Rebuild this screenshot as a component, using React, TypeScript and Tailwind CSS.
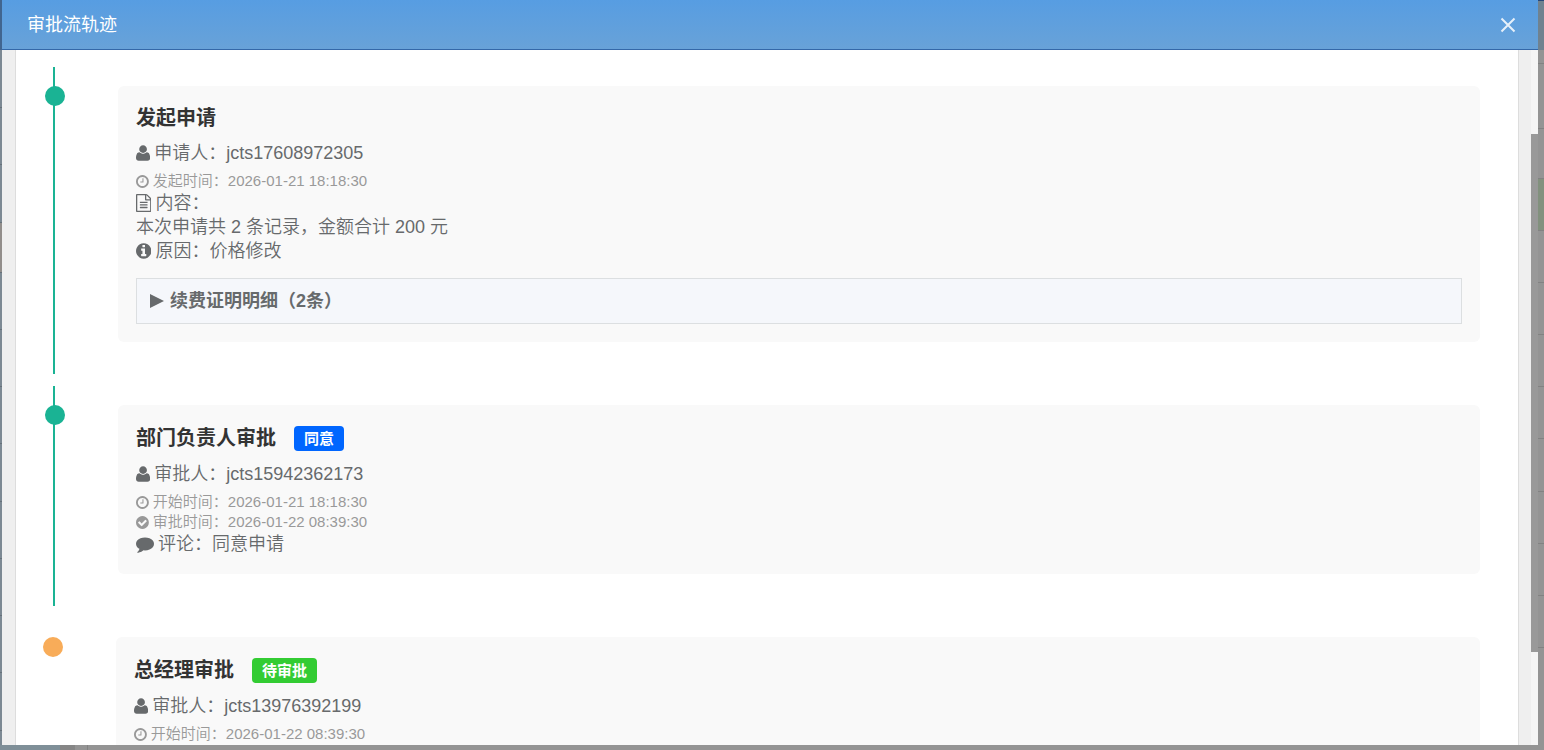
import React from "react";

const DISC =
  "M1664 896q0 209-103 385.5t-279.5 279.5-385.5 103-385.5-103-279.5-279.5-103-385.5 103-385.5 279.5-279.5 385.5-103 385.5 103 279.5 279.5 103 385.5z";

const ICONS = {
  user: {
    box: "192 0 1408 1792",
    d: "M1600 1405q0 120-73 189.5t-194 69.5h-874q-121 0-194-69.5t-73-189.5q0-53 3.5-103.5t14-109 26.5-108.5 43-97.5 62-81 85.5-53.5 111.5-20q9 0 42 21.5t74.5 48 108 48 133.5 21.5 133.5-21.5 108-48 74.5-48 42-21.5q61 0 111.5 20t85.5 53.5 62 81 43 97.5 26.5 108.5 14 109 3.5 103.5zM1280 512q0 159-112.5 271.5t-271.5 112.5-271.5-112.5-112.5-271.5 112.5-271.5 271.5-112.5 271.5 112.5 112.5 271.5z",
  },
  clock: {
    box: "128 0 1536 1792",
    d:
      "M1024 544v448q0 14-9 23t-23 9h-320q-14 0-23-9t-9-23v-64q0-14 9-23t23-9h224v-352q0-14 9-23t23-9h64q14 0 23 9t9 23zM1440 896q0-148-73-273t-198-198-273-73-273 73-198 198-73 273 73 273 198 198 273 73 273-73 198-198 73-273z" +
      DISC,
  },
  file: {
    box: "128 0 1536 1792",
    d: "M1596 380q28 28 48 76t20 88v1152q0 40-28 68t-68 28h-1344q-40 0-68-28t-28-68v-1600q0-40 28-68t68-28h896q40 0 88 20t76 48zm-444-244v376h376q-10-29-22-41l-313-313q-12-12-41-22zm384 1528v-1024h-416q-40 0-68-28t-28-68v-416h-768v1536h1280zm-1024-864q0-14 9-23t23-9h704q14 0 23 9t9 23v64q0 14-9 23t-23 9h-704q-14 0-23-9t-9-23v-64zm736 224q14 0 23 9t9 23v64q0 14-9 23t-23 9h-704q-14 0-23-9t-9-23v-64q0-14 9-23t23-9h704zm0 256q14 0 23 9t9 23v64q0 14-9 23t-23 9h-704q-14 0-23-9t-9-23v-64q0-14 9-23t23-9h704z",
  },
  info: {
    box: "128 0 1536 1792",
    d:
      "M1152 1376v-160q0-14-9-23t-23-9h-96v-512q0-14-9-23t-23-9h-320q-14 0-23 9t-9 23v160q0 14 9 23t23 9h96v320h-96q-14 0-23 9t-9 23v160q0 14 9 23t23 9h448q14 0 23-9t9-23zM1024 480v-160q0-14-9-23t-23-9h-192q-14 0-23 9t-9 23v160q0 14 9 23t23 9h192q14 0 23-9t9-23z" +
      DISC,
  },
  check: {
    box: "128 0 1536 1792",
    d:
      "M1412 734q0-28-18-46l-91-90q-19-19-45-19t-45 19l-408 407-226-226q-19-19-45-19t-45 19l-91 90q-18 18-18 46 0 27 18 45l362 362q19 19 45 19 27 0 46-19l543-543q18-18 18-45z" +
      DISC,
  },
  comment: {
    box: "0 0 1792 1792",
    d: "M1792 896q0 174-120 321.5t-326 233-450 85.5q-70 0-145-8-198 175-460 225-49 14-114 22-17 2-30.5-9t-17.5-29v-1q-3-4-.5-12t2-10 4.5-9.5l6-9 7-8.5 8-9q7-8 31-34.5t34.5-38 31-39.5 32.5-51 27-59 26-76q-157-89-247.5-220t-90.5-281q0-174 120-321.5t326-233 450-85.5 450 85.5 326 233 120 321.5z",
  },
};

type IconName = keyof typeof ICONS;

function Icon({ name }: { name: IconName }) {
  return (
    <svg viewBox={ICONS[name].box} className="h-[1em] w-auto shrink-0 fill-current" fillRule="evenodd" aria-hidden="true">
      <path d={ICONS[name].d} />
    </svg>
  );
}

function Line({ icon, small, children }: { icon?: IconName; small?: boolean; children: React.ReactNode }) {
  return (
    <p
      className={
        small
          ? "flex items-center gap-1 text-[15px] leading-5 text-[#999]"
          : "flex items-center gap-1 text-lg leading-6 text-[#676a6c]"
      }
    >
      {icon && <Icon name={icon} />}
      <span>{children}</span>
    </p>
  );
}

interface StepProps {
  title: string;
  badge?: string;
  badgeClass?: string;
  person: string;
  done?: boolean;
  children: React.ReactNode;
}

function Step({ title, badge, badgeClass, person, done, children }: StepProps) {
  return (
    <li className={`flex items-start pt-[19px] pb-8 ${done ? "mb-3 border-l-2 border-[#1ab394]" : ""}`}>
      <span className={`-ml-2.5 size-5 shrink-0 rounded-full ${done ? "bg-[#1ab394]" : "bg-[#f8ac59]"}`} />
      <article className="ml-[53px] min-w-0 flex-1 rounded-md bg-[#f9f9f9] p-[18px]">
        <header className="flex items-center gap-[18px]">
          <h3 className="text-xl leading-7 font-bold text-[#333]">{title}</h3>
          {badge && (
            <span className={`mt-[3px] mb-[2px] rounded px-2.5 text-[15px] leading-[25px] font-bold text-white ${badgeClass}`}>
              {badge}
            </span>
          )}
        </header>
        <div className="mt-[9px] mb-1.5">
          <Line icon="user">{person}</Line>
        </div>
        {children}
      </article>
    </li>
  );
}

const LEFT_ROWS = [58, 57, 58, 50, 57, 57, 57, 58, 57, 57, 57, 58];
const RIGHT_ROWS = [14, 65, 50, 52, 52, 52, 52, 52, 53, 52, 52, 52];

function Backdrop() {
  return (
    <div className="absolute inset-0 flex flex-col bg-[#949494]" aria-hidden="true">
      <div className="flex min-h-0 flex-1 justify-between overflow-hidden">
        <div className="flex w-[2px] flex-col bg-[#7c8993]">
          <div className="h-[50px] shrink-0 bg-[#41658f]" />
          {LEFT_ROWS.map((h, i) => (
            <div
              key={i}
              className={`shrink-0 border-b border-[#66717a] ${i === 3 ? "bg-[#928e8b]" : ""}`}
              style={{ height: h }}
            />
          ))}
        </div>
        <div className="flex w-1.5 flex-col">
          <div className="h-[50px] shrink-0 border-t border-[#26477a] bg-[#6f8290]" />
          {RIGHT_ROWS.map((h, i) => (
            <div
              key={i}
              className={`shrink-0 border-b border-[#828282] ${i === 3 ? "bg-[#82917e]" : ""}`}
              style={{ height: h }}
            />
          ))}
        </div>
      </div>
      <div className="flex h-[5px] shrink-0">
        <div className="w-[60px] bg-[#7f8f98]" />
        <div className="w-[15px] bg-[#868686]" />
        <div className="w-[13px] border-r border-[#828282]" />
      </div>
    </div>
  );
}

export default function App() {
  return (
    <div className="relative h-screen overflow-hidden pr-1.5 pb-[5px] pl-[2px] font-['Liberation_Sans','Noto_Sans_CJK_SC',sans-serif]">
      <Backdrop />
      <section role="dialog" aria-labelledby="dialog-title" className="relative flex h-full flex-col bg-[#efefef]">
        <header className="flex h-[50px] shrink-0 items-center justify-between border-b border-[#3468a8] bg-linear-to-b from-[#579de2] to-[#68a2d8] pr-[22px] pl-[25px] text-white">
          <h2 id="dialog-title" className="text-lg leading-6 font-normal">
            审批流轨迹
          </h2>
          <button type="button" aria-label="关闭" className="p-0">
            <svg viewBox="0 0 16 16" className="size-4 stroke-[#e6f0fa] stroke-2" aria-hidden="true">
              <path d="M1.5 1.5l13 13M14.5 1.5l-13 13" />
            </svg>
          </button>
        </header>
        <div className="flex min-h-0 flex-1">
          <main className="mr-3 ml-[13px] min-w-0 flex-1 overflow-hidden border-x border-[#ddd] bg-white pt-[17px] pr-[38px] pl-[37px] font-[350]">
            <ol>
              <Step title="发起申请" person="申请人：jcts17608972305" done>
                <Line icon="clock" small>发起时间：2026-01-21 18:18:30</Line>
                <Line icon="file">内容：</Line>
                <Line>本次申请共 2 条记录，金额合计 200 元</Line>
                <Line icon="info">原因：价格修改</Line>
                <details className="mt-[15px] border border-[#dcdfe1] bg-[#f5f7fb] text-[#676a6c]">
                  <summary className="flex h-11 cursor-pointer list-none items-center gap-1.5 px-[13px] text-lg leading-6 font-bold">
                    <svg viewBox="0 0 14 14" className="size-3.5 fill-current" aria-hidden="true">
                      <path d="M0 0l14 7-14 7z" />
                    </svg>
                    续费证明明细（2条）
                  </summary>
                </details>
              </Step>
              <Step title="部门负责人审批" badge="同意" badgeClass="bg-[#0066ff]" person="审批人：jcts15942362173" done>
                <Line icon="clock" small>开始时间：2026-01-21 18:18:30</Line>
                <Line icon="check" small>审批时间：2026-01-22 08:39:30</Line>
                <Line icon="comment">评论：同意申请</Line>
              </Step>
              <Step title="总经理审批" badge="待审批" badgeClass="bg-[#33cc33]" person="审批人：jcts13976392199">
                <Line icon="clock" small>开始时间：2026-01-22 08:39:30</Line>
              </Step>
            </ol>
          </main>
          <div className="flex w-[7px] flex-col bg-[#f5f5f5]" aria-hidden="true">
            <div className="grow-[84]" />
            <div className="grow-[518] bg-[#999]" />
            <div className="grow-[93]" />
          </div>
        </div>
      </section>
    </div>
  );
}
